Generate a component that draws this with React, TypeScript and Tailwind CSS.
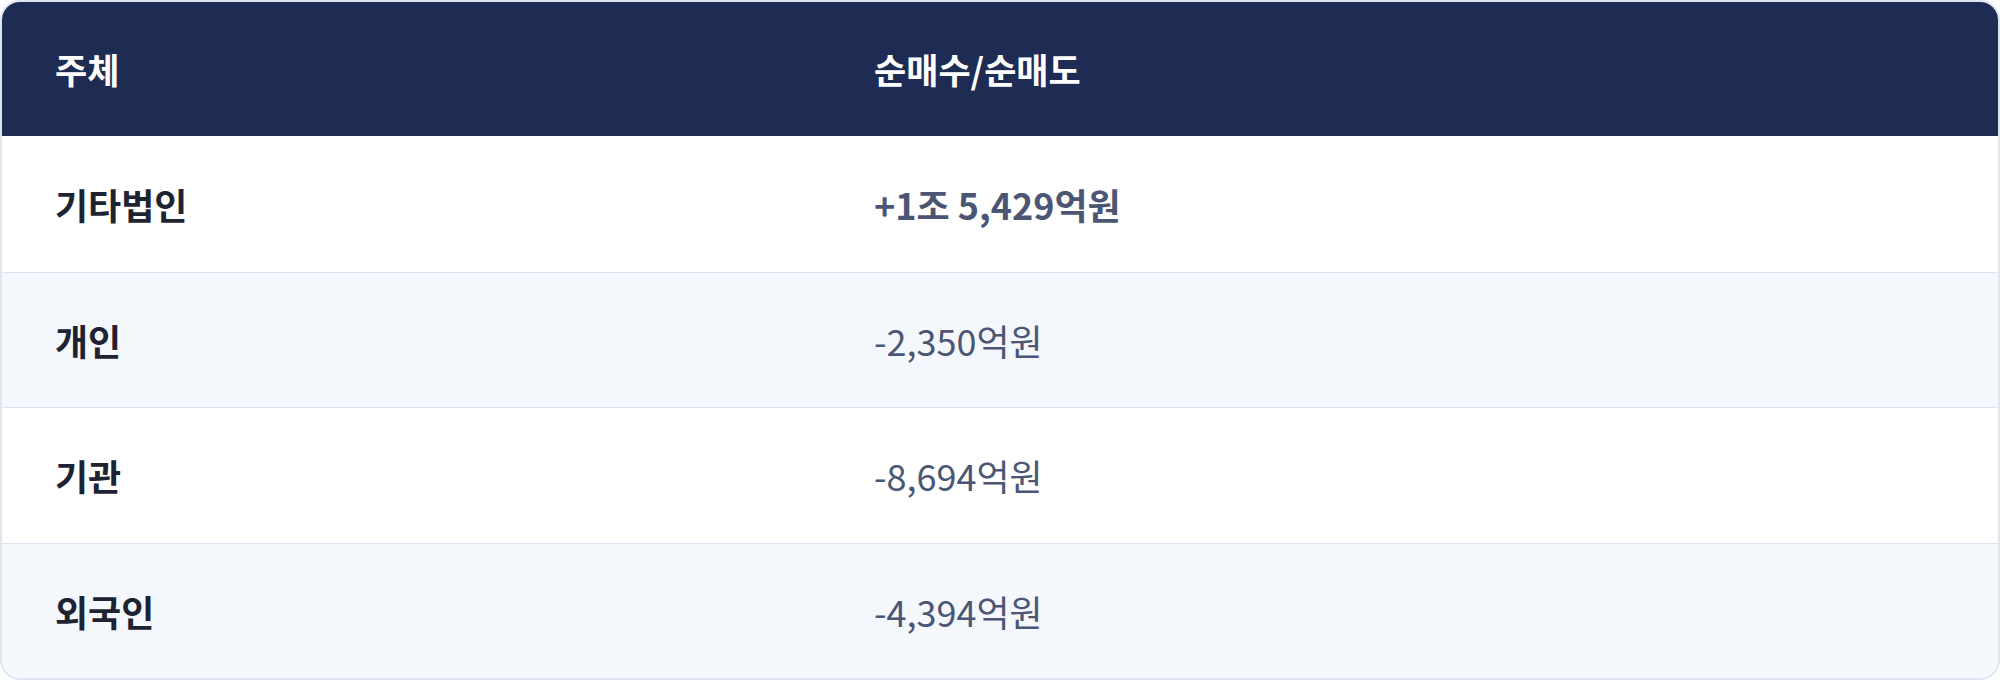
const rows = [
  { name: '기타법인', value: '+1조 5,429억원', strong: true },
  { name: '개인', value: '-2,350억원' },
  { name: '기관', value: '-8,694억원' },
  { name: '외국인', value: '-4,394억원' },
];

const font = { fontFamily: '"Noto Sans CJK KR", "Noto Sans", sans-serif' };

export default function App() {
  return (
    <div className="w-[2000px] h-[680px] bg-white" style={font}>
      <div className="h-full rounded-[20px] border-2 border-[#dfe5f1] overflow-hidden">
        {/* Header */}
        <div className="grid grid-cols-[818px_1fr] h-[134px] items-center bg-[#1e2b53] text-white text-[35px] font-bold">
          <div className="pl-[53px]">주체</div>
          <div className="pl-[54px]">순매수/순매도</div>
        </div>

        {rows.map((r, i) => (
          <div
            key={r.name}
            className={
              'grid grid-cols-[818px_1fr] h-[135.5px] items-center text-[36px] ' +
              (i > 0 ? 'border-t border-[#dce3f0] ' : '') +
              (i % 2 === 1 ? 'bg-[#f4f7fc]' : 'bg-white')
            }
          >
            <div className="pl-[53px] font-bold text-[#1e2332]">{r.name}</div>
            <div
              className={
                'pl-[54px] text-[#4b5675] ' + (r.strong ? 'font-bold' : 'font-normal')
              }
            >
              {r.value}
            </div>
          </div>
        ))}
      </div>
    </div>
  );
}
